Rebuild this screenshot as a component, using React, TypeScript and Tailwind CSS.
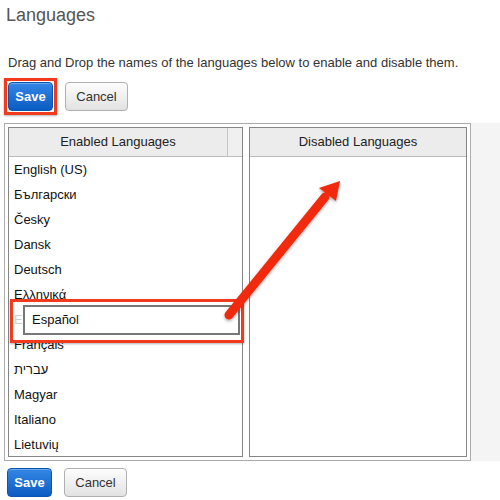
const enabled = [
  "English (US)",
  "Български",
  "Česky",
  "Dansk",
  "Deutsch",
  "Ελληνικά",
  "Español",
  "Français",
  "עברית",
  "Magyar",
  "Italiano",
  "Lietuvių",
];

const SaveButton = () => (
  <button className="h-[29px] w-[45px] rounded-[4px] border border-[#0a55b0] bg-gradient-to-b from-[#3386e6] to-[#0a5cc2] text-[13px] font-bold text-white shadow-[inset_0_1px_0_rgba(255,255,255,0.3)]">
    Save
  </button>
);

const CancelButton = () => (
  <button className="h-[29px] w-[63px] rounded-[4px] border border-[#b0b0b0] bg-gradient-to-b from-[#fdfdfd] to-[#e2e2e2] text-[13px] text-[#333]">
    Cancel
  </button>
);

const Panel = ({
  title,
  items,
  divider,
  className,
}: {
  title: string;
  items: string[];
  divider?: boolean;
  className?: string;
}) => (
  <div className={"flex flex-col border border-[#868686] bg-white " + className}>
    <div className="flex h-[29px] shrink-0 border-b border-[#bdbdbd] bg-[#ececec]">
      <div className="flex flex-1 items-center justify-center text-[13px] text-[#222]">
        {title}
      </div>
      {divider && (
        <div className="w-[15px] border-l border-[#c4c4c4] bg-[#f0f0f0]" />
      )}
    </div>
    <ul>
      {items.map((item) => (
        <li
          key={item}
          className={
            "flex h-[25px] items-center pl-[5px] text-[13px] " +
            (item === "Español" ? "text-[#d0d0d0]" : "text-[#111]")
          }
        >
          {item}
        </li>
      ))}
    </ul>
  </div>
);

export default function App() {
  return (
    <div className="relative h-[500px] w-[500px] overflow-hidden bg-white font-['Liberation_Sans',Arial,sans-serif]">
      <h1 className="pl-[6px] pt-[3px] text-[18px] leading-[24px] text-[#555]">
        Languages
      </h1>
      <p className="mt-[28px] pl-[8px] text-[13px] leading-[16px] text-[#333]">
        Drag and Drop the names of the languages below to enable and disable
        them.
      </p>
      <div className="mt-[7px] flex items-center gap-[8px] pl-[4px]">
        <div className="border-[3px] border-[#f23a1f] p-[1px] shadow-[0_1px_2px_rgba(0,0,0,0.3)]">
          <div className="flex">
            <SaveButton />
          </div>
        </div>
        <CancelButton />
      </div>

      <div className="mt-[8px] flex h-[338px]">
        <div className="ml-[4px] flex w-[467px] gap-[6px] border border-[#ababab] p-[3px]">
          <Panel
            title="Enabled Languages"
            items={enabled}
            divider
            className="w-[235px]"
          />
          <Panel title="Disabled Languages" items={[]} className="flex-1" />
        </div>
        <div className="flex-1 bg-[#f4f4f4]" />
      </div>

      <div className="mt-[7px] flex gap-[12px] pl-[7px]">
        <SaveButton />
        <CancelButton />
      </div>

      {/* dragged item */}
      <div className="absolute left-[23px] top-[305px] flex h-[30px] w-[217px] items-center border-2 border-[#777] bg-white pl-[7px] text-[13px] text-[#111]">
        Español
      </div>
      {/* callout box */}
      <div className="absolute left-[10px] top-[299px] h-[44px] w-[234px] border-[3px] border-[#f23a1f] shadow-[0_1px_2px_rgba(0,0,0,0.3)]" />

      {/* arrow */}
      <svg
        className="pointer-events-none absolute left-0 top-0"
        width="500"
        height="500"
        viewBox="0 0 500 500"
      >
        <defs>
          <filter id="sh" x="-20%" y="-20%" width="140%" height="140%">
            <feDropShadow dx="0" dy="1.5" stdDeviation="1.5" floodColor="#000" floodOpacity="0.35" />
          </filter>
        </defs>
        <g filter="url(#sh)">
          <line
            x1="229"
            y1="315"
            x2="325"
            y2="197"
            stroke="#f22a0c"
            strokeWidth="9"
            strokeLinecap="round"
          />
          <polygon points="340,181 319,188 336,201" fill="#f22a0c" />
        </g>
      </svg>
    </div>
  );
}
